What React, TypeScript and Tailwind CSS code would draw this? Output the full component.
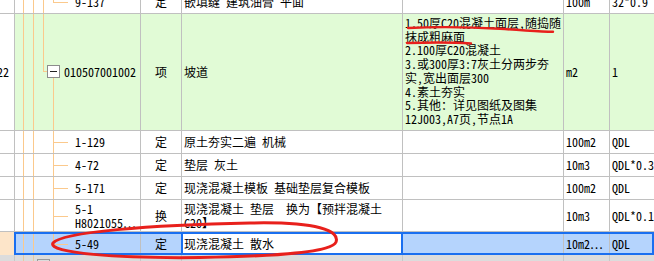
const GRID = 'border-[#c0c0c0]'

type Child = {
  code: string[]
  kind: string
  name: string[]
  unit: string
  qty: string
  tall?: boolean
}

const CHILDREN: Child[] = [
  { code: ['1-129'], kind: '定', name: ['原土夯实二遍\u2002机械'], unit: '100m2', qty: 'QDL' },
  { code: ['4-72'], kind: '定', name: ['垫层\u2002灰土'], unit: '10m3', qty: 'QDL*0.3' },
  { code: ['5-171'], kind: '定', name: ['现浇混凝土模板\u2002基础垫层复合模板'], unit: '100m2', qty: 'QDL' },
  {
    code: ['5-1', 'H8021055…'],
    kind: '换',
    name: ['现浇混凝土\u2002垫层\u2002\u2002换为【预拌混凝土', 'C20】'],
    unit: '10m3',
    qty: 'QDL*0.1',
    tall: true,
  },
]

const FEATURE_LINES = [
  '1.50厚C20混凝土面层,随捣随',
  '抹成粗麻面',
  '2.100厚C20混凝土',
  '3.或300厚3:7灰土分两步夯',
  '实，宽出面层300',
  '4.素土夯实',
  '5.其他：详见图纸及图集',
  '12J003,A7页，节点1A',
]

function Lines({ items }: { items: string[] }) {
  return (
    <div className="flex flex-col leading-[14px]">
      {items.map((t) => (
        <span key={t} className="whitespace-pre">{t}</span>
      ))}
    </div>
  )
}

function Annotations() {
  return (
    <svg className="pointer-events-none absolute inset-0" width="654" height="261" viewBox="0 0 654 261" fill="none">
      <path
        d="M408 28 C 440 26.5, 470 27, 500 28.8 S 540 31.8, 553 31.8"
        stroke="#e8201c"
        strokeWidth="2.4"
        strokeLinecap="round"
      />
      <path d="M407 43 C 430 42.3, 455 42.3, 471 43.5" stroke="#e8201c" strokeWidth="2.4" strokeLinecap="round" />
      <path
        d="M53 243 C 62 232, 150 225, 250 223 C 318 221.5, 340 231, 336 242 C 332 252, 282 256, 200 257.5 C 118 258.5, 47 253, 53 243 Z"
        stroke="#e8201c"
        strokeWidth="3"
      />
    </svg>
  )
}

export default function App() {
  return (
    <div className="relative h-[261px] w-[654px] overflow-hidden bg-[#dcdcdc] font-['Noto_Sans_CJK_SC',sans-serif] text-[12px] text-black [font-feature-settings:'hwid']">
      <div className="-mt-[10px] flex flex-col">
        {/* row cut off at the top */}
        <div className={`flex h-[24px] border-b bg-white ${GRID}`}>
          <div className={`w-[15px] shrink-0 border-r ${GRID}`} />
          <div className={`relative flex w-[126px] shrink-0 items-center border-r pl-[60px] ${GRID}`}>
            <div className="absolute top-0 bottom-0 left-[8px] w-px bg-[#fbc98c]" />
            <div className="absolute top-0 bottom-0 left-[18px] w-px bg-[#fbc98c]" />
            <div className="absolute top-0 bottom-0 left-[28px] w-px bg-[#fbc98c]" />
            <div className="absolute top-0 left-[38px] h-1/2 w-px bg-[#fbc98c]" />
            <div className="absolute top-1/2 left-[38px] h-px w-[15px] bg-[#fbc98c]" />
            <span>9-137</span>
          </div>
          <div className={`flex w-[41px] shrink-0 items-center justify-center border-r ${GRID}`}>定</div>
          <div className={`flex w-[221px] shrink-0 items-center border-r pl-[2px] whitespace-pre ${GRID}`}>
            嵌填缝{'\u2002'}建筑油膏{'\u2002'}平面
          </div>
          <div className={`w-[161px] shrink-0 border-r ${GRID}`} />
          <div className={`flex w-[46px] shrink-0 items-center border-r pl-[2px] ${GRID}`}>100m</div>
          <div className="flex flex-1 items-center pl-[2px] whitespace-nowrap">32*0.9</div>
        </div>

        {/* list item row */}
        <div className={`flex h-[117px] border-b bg-[#e1fbd6] ${GRID}`}>
          <div className={`flex w-[15px] shrink-0 items-center justify-end overflow-hidden border-r bg-white pr-[5px] ${GRID}`}>
            <span className="shrink-0">22</span>
          </div>
          <div className={`relative flex w-[126px] shrink-0 items-center border-r pl-[49px] ${GRID}`}>
            <div className="absolute top-0 bottom-0 left-[8px] w-px bg-[#fbc98c]" />
            <div className="absolute top-0 bottom-0 left-[18px] w-px bg-[#fbc98c]" />
            <div className="absolute top-0 left-[28px] h-[57px] w-px bg-[#fbc98c]" />
            <div className="absolute top-[57px] left-[28px] h-px w-[4px] bg-[#fbc98c]" />
            <div className="absolute top-[64px] bottom-0 left-[38px] w-px bg-[#fbc98c]" />
            <div className="absolute top-[51px] left-[32px] flex h-[13px] w-[13px] items-center justify-center border border-[#8c8c8c] bg-white">
              <div className="h-px w-[7px] bg-[#222]" />
            </div>
            <span>010507001002</span>
          </div>
          <div className={`flex w-[41px] shrink-0 items-center justify-center border-r ${GRID}`}>项</div>
          <div className={`flex w-[221px] shrink-0 items-center border-r pl-[2px] ${GRID}`}>坡道</div>
          <div className={`w-[161px] shrink-0 border-r pt-[2px] pl-[2px] ${GRID}`}>
            <div className="flex flex-col leading-[13.7px]">
              {FEATURE_LINES.map((t) => (
                <span key={t} className="whitespace-nowrap">{t}</span>
              ))}
            </div>
          </div>
          <div className={`flex w-[46px] shrink-0 items-center border-r pl-[2px] ${GRID}`}>m2</div>
          <div className="flex flex-1 items-center pl-[2px]">1</div>
        </div>

        {/* sub items */}
        {CHILDREN.map((row) => (
          <div key={row.code[0]} className={`flex border-b bg-white ${GRID} ${row.tall ? 'h-[32px]' : 'h-[23px]'}`}>
            <div className={`w-[15px] shrink-0 border-r ${GRID}`} />
            <div className={`relative flex w-[126px] shrink-0 items-center border-r pl-[60px] ${GRID}`}>
              <div className="absolute top-0 bottom-0 left-[8px] w-px bg-[#fbc98c]" />
              <div className="absolute top-0 bottom-0 left-[18px] w-px bg-[#fbc98c]" />
              <div className="absolute top-0 bottom-0 left-[38px] w-px bg-[#fbc98c]" />
              <div className="absolute top-1/2 left-[38px] h-px w-[15px] bg-[#fbc98c]" />
              <Lines items={row.code} />
            </div>
            <div className={`flex w-[41px] shrink-0 items-center justify-center border-r ${GRID}`}>{row.kind}</div>
            <div className={`flex w-[221px] shrink-0 items-center border-r pl-[2px] ${GRID}`}>
              <Lines items={row.name} />
            </div>
            <div className={`w-[161px] shrink-0 border-r ${GRID}`} />
            <div className={`flex w-[46px] shrink-0 items-center border-r pl-[2px] ${GRID}`}>{row.unit}</div>
            <div className="flex flex-1 items-center overflow-hidden pl-[2px] whitespace-nowrap">{row.qty}</div>
          </div>
        ))}

        {/* selected row */}
        <div className="flex h-[23px]">
          <div className="w-[14px] shrink-0 bg-[#fde5c9]" />
          <div className="flex flex-1 border-2 border-[#1a6ff0] bg-[#b5d4fd]">
            <div className={`relative flex w-[125px] shrink-0 items-center border-r pl-[59px] ${GRID}`}>
              <div className="absolute top-0 bottom-0 left-[7px] w-px bg-[#fbc98c]" />
              <div className="absolute top-0 bottom-0 left-[17px] w-px bg-[#fbc98c]" />
              <div className="absolute top-0 left-[37px] h-1/2 w-px bg-[#fbc98c]" />
              <div className="absolute top-1/2 left-[37px] h-px w-[15px] bg-[#fbc98c]" />
              <span>5-49</span>
            </div>
            <div className="flex w-[40px] shrink-0 items-center justify-center">定</div>
            <div className="flex w-[222px] shrink-0 items-center border-x-2 border-[#1a6ff0] bg-white pl-[1px] whitespace-pre">
              现浇混凝土{'\u2002'}散水
            </div>
            <div className={`w-[161px] shrink-0 border-r ${GRID}`} />
            <div className={`flex w-[46px] shrink-0 items-center border-r pl-[2px] ${GRID}`}>10m2…</div>
            <div className="flex flex-1 items-center pl-[2px]">QDL</div>
          </div>
        </div>

        {/* next row, mostly hidden */}
        <div className="flex h-[20px] bg-[#dcdcdc]">
          <div className="w-[15px] shrink-0 border-r border-[#c8c8c8]" />
          <div className="relative w-[126px] shrink-0 border-r border-[#c8c8c8]">
            <div className="absolute top-0 bottom-0 left-[8px] w-px bg-[#e8c9a0]" />
            <div className="absolute top-0 bottom-0 left-[18px] w-px bg-[#e8c9a0]" />
            <div className="absolute top-[4px] left-[22px] h-[13px] w-[13px] border border-[#9a9a9a]" />
          </div>
          <div className="w-[41px] shrink-0 border-r border-[#c8c8c8]" />
          <div className="w-[221px] shrink-0 border-r border-[#c8c8c8]" />
          <div className="w-[161px] shrink-0 border-r border-[#c8c8c8]" />
          <div className="w-[46px] shrink-0 border-r border-[#c8c8c8]" />
          <div className="flex-1" />
        </div>
      </div>

      <Annotations />
    </div>
  )
}
